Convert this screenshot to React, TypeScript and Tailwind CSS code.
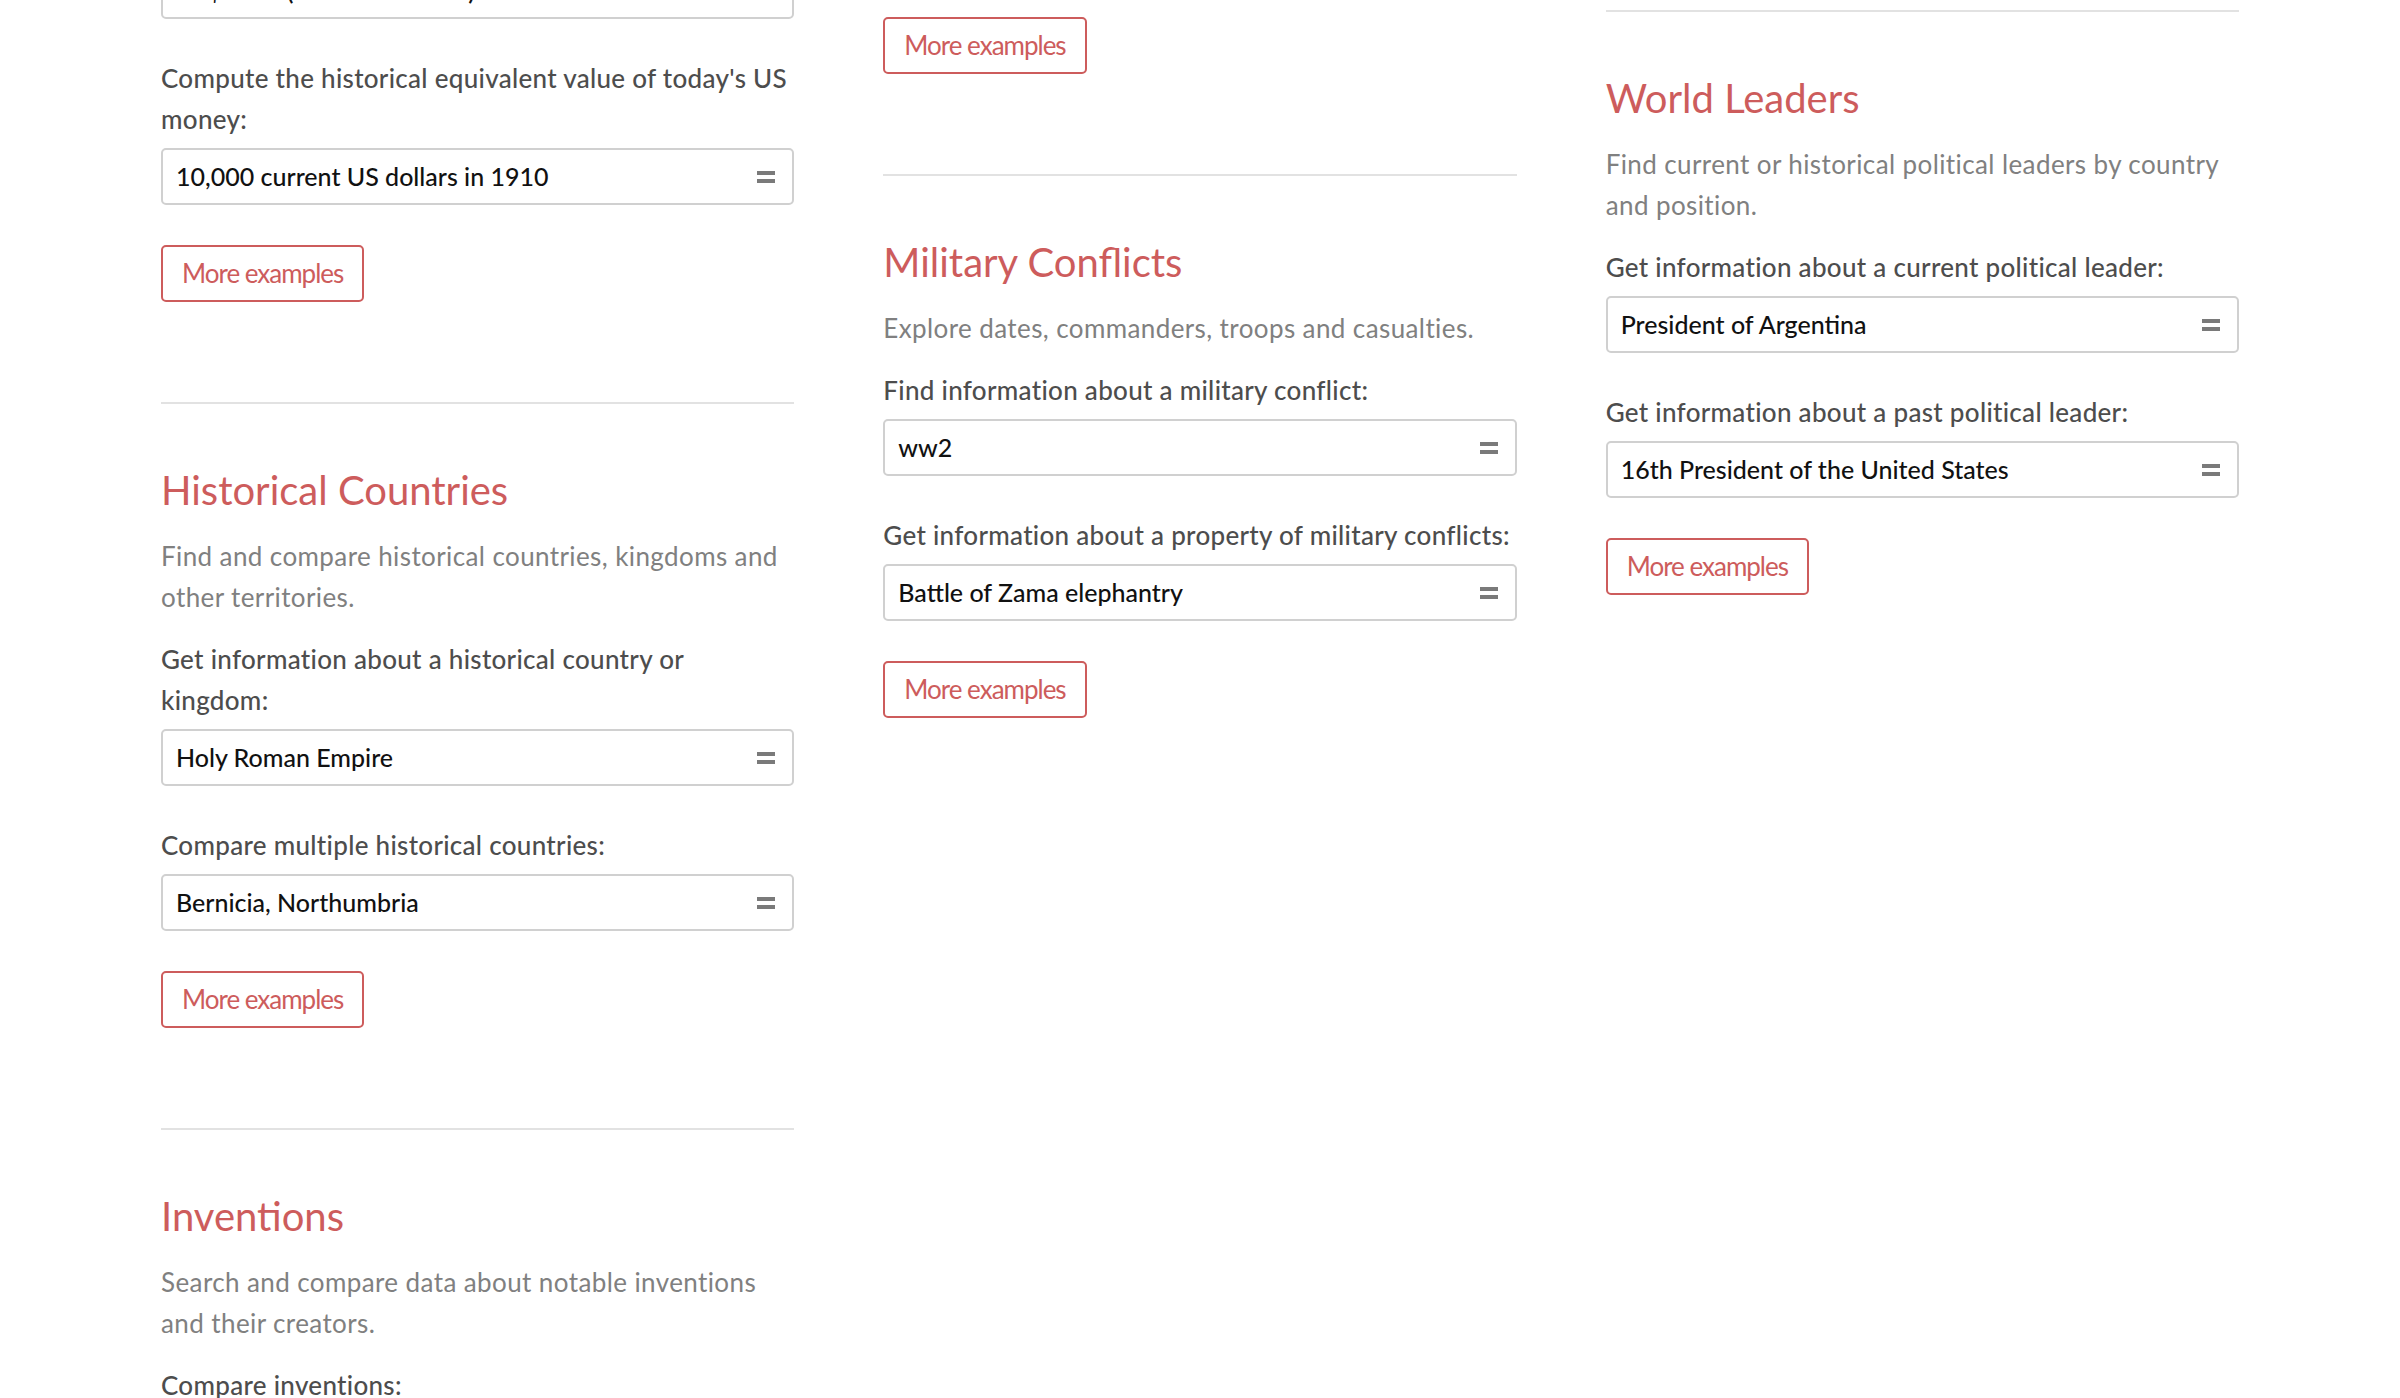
import React from "react";

type Item = { label: string[]; value: string };

function Lines({ lines }: { lines: string[] }) {
  return (
    <>
      {lines.map((l, i) => (
        <React.Fragment key={i}>
          {i > 0 && <br />}
          {l}
        </React.Fragment>
      ))}
    </>
  );
}

function EqIcon() {
  return (
    <div className="flex flex-col gap-[4px] w-[18px] shrink-0">
      <div className="h-[4px] bg-[#7a7a7a]" />
      <div className="h-[4px] bg-[#7a7a7a]" />
    </div>
  );
}

function InputBox({ value }: { value: string }) {
  return (
    <div className="h-[57px] border-2 border-[#d0d0d0] rounded-[5px] bg-white flex items-center justify-between pl-[13px] pr-[17px]">
      <span className="text-[25px] font-medium text-[#111111] whitespace-nowrap">{value}</span>
      <EqIcon />
    </div>
  );
}

function MoreButton() {
  return (
    <div className="self-start h-[57px] border-2 border-[#cd5c5c] rounded-[5px] px-[19px] flex items-center text-[26px] tracking-[-1px] text-[#cd5c5c] whitespace-nowrap">
      More examples
    </div>
  );
}

function LabelItem({ item, first }: { item: Item; first: boolean }) {
  return (
    <div className={first ? "mt-[21px]" : "mt-[39px]"}>
      <div className="text-[26px] leading-[41px] tracking-[0.3px] font-medium text-[#4d4d4d] whitespace-nowrap">
        <Lines lines={item.label} />
      </div>
      <div className="mt-[8px]">
        <InputBox value={item.value} />
      </div>
    </div>
  );
}

function Section({
  title,
  desc,
  items,
  topClass,
}: {
  title: string;
  desc: string[];
  items: Item[];
  topClass: string;
}) {
  return (
    <div className={"flex flex-col " + topClass}>
      <div className="h-[2px] bg-[#e2e2e2]" />
      <h2 className="mt-[58px] text-[40px] leading-[56px] text-[#cd5c5c] font-normal whitespace-nowrap">
        {title}
      </h2>
      <p className="mt-[18px] text-[26px] leading-[41px] tracking-[0.4px] text-[#808080] whitespace-nowrap">
        <Lines lines={desc} />
      </p>
      {items.map((it, i) => (
        <LabelItem key={i} item={it} first={i === 0} />
      ))}
      <div className="mt-[40px] flex flex-col">
        <MoreButton />
      </div>
    </div>
  );
}

export default function App() {
  return (
    <div className="w-full h-[1398px] overflow-hidden bg-white font-[Lato,sans-serif]">
      <div className="grid grid-cols-3 gap-x-[89px] px-[161px]">
        {/* Left column */}
        <div className="flex flex-col">
          <div className="mt-[-38px]">
            <InputBox value="US$1800 (1800 US dollars)" />
          </div>
          <LabelItem
            first={false}
            item={{
              label: ["Compute the historical equivalent value of today's US", "money:"],
              value: "10,000 current US dollars in 1910",
            }}
          />
          <div className="mt-[40px] flex flex-col">
            <MoreButton />
          </div>
          <Section
            topClass="mt-[100px]"
            title="Historical Countries"
            desc={["Find and compare historical countries, kingdoms and", "other territories."]}
            items={[
              {
                label: ["Get information about a historical country or", "kingdom:"],
                value: "Holy Roman Empire",
              },
              { label: ["Compare multiple historical countries:"], value: "Bernicia, Northumbria" },
            ]}
          />
          <Section
            topClass="mt-[100px]"
            title="Inventions"
            desc={["Search and compare data about notable inventions", "and their creators."]}
            items={[{ label: ["Compare inventions:"], value: "telephone vs telegraph" }]}
          />
        </div>

        {/* Middle column */}
        <div className="flex flex-col">
          <div className="mt-[17px] flex flex-col">
            <MoreButton />
          </div>
          <Section
            topClass="mt-[100px]"
            title="Military Conflicts"
            desc={["Explore dates, commanders, troops and casualties."]}
            items={[
              { label: ["Find information about a military conflict:"], value: "ww2" },
              {
                label: ["Get information about a property of military conflicts:"],
                value: "Battle of Zama elephantry",
              },
            ]}
          />
        </div>

        {/* Right column */}
        <div className="flex flex-col">
          <Section
            topClass="mt-[10px]"
            title="World Leaders"
            desc={["Find current or historical political leaders by country", "and position."]}
            items={[
              {
                label: ["Get information about a current political leader:"],
                value: "President of Argentina",
              },
              {
                label: ["Get information about a past political leader:"],
                value: "16th President of the United States",
              },
            ]}
          />
        </div>
      </div>
    </div>
  );
}
